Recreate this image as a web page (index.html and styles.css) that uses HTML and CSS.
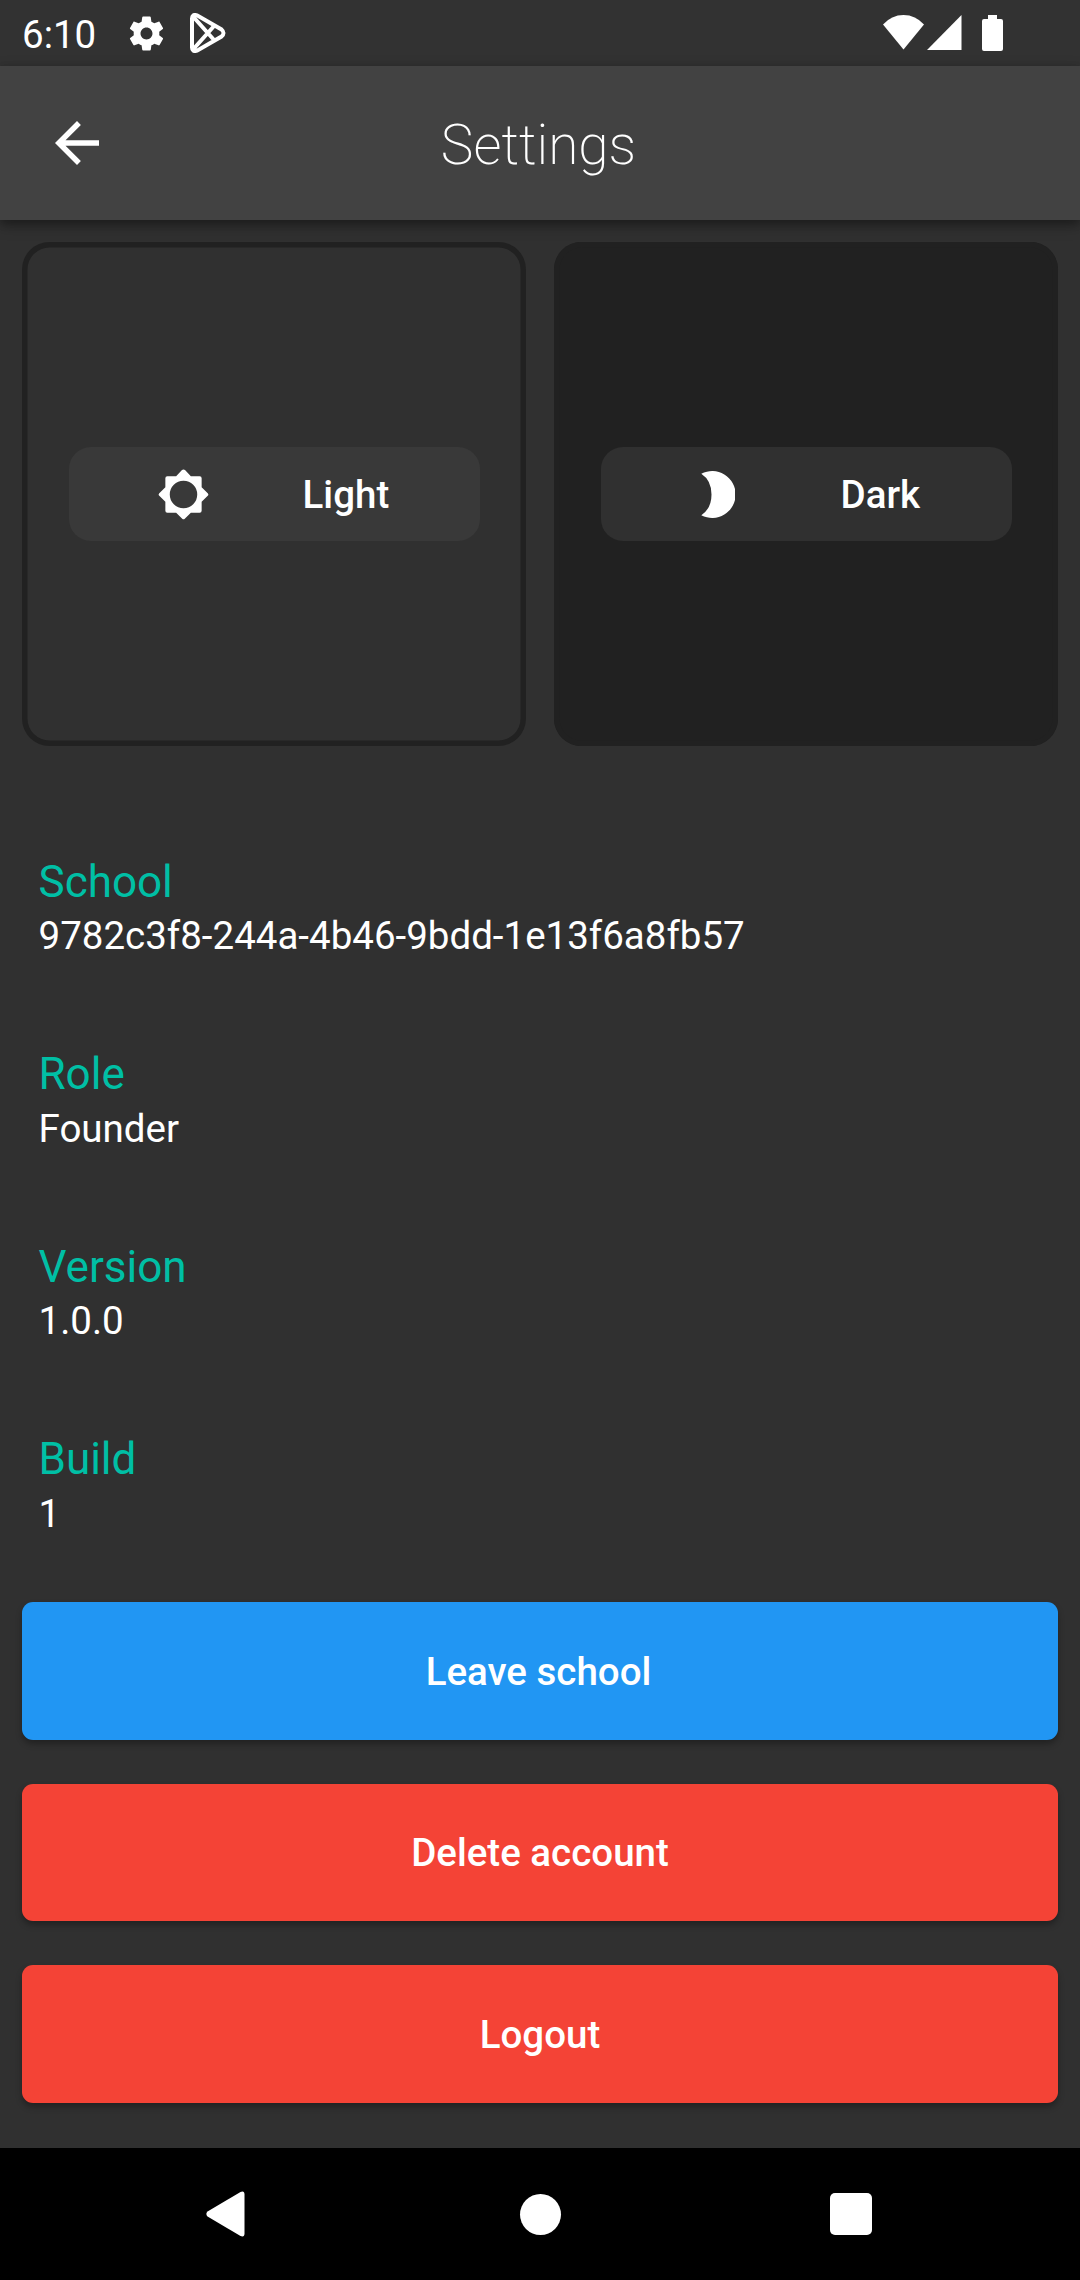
FILE: index.html
```html
<!DOCTYPE html>
<html lang="en">
<head>
<meta charset="utf-8">
<title>Settings</title>
<link rel="stylesheet" href="styles.css">
</head>
<body>
<div class="screen">
  <header class="status">
    <span class="time">6:10</span>
    <svg class="gear" viewBox="0 0 24 24"><path d="M19.430 12.980c.04-.32.07-.64.07-.98s-.03-.66-.07-.98l2.110-1.650c.19-.15.24-.42.12-.64l-2-3.460c-.12-.22-.39-.3-.61-.22l-2.490 1c-.52-.4-1.080-.73-1.690-.98l-.38-2.650C14.460 2.180 14.250 2 14 2h-4c-.25 0-.46.18-.49.42l-.38 2.650c-.61.25-1.170.59-1.690.98l-2.490-1c-.23-.09-.49 0-.61.22l-2 3.460c-.13.22-.07.49.12.64l2.110 1.650c-.04.32-.07.65-.07.98s.03.66.07.98l-2.110 1.650c-.19.15-.24.42-.12.64l2 3.460c.12.22.39.3.61.22l2.490-1c.52.4 1.080.73 1.690.98l.38 2.650c.03.24.24.42.49.42h4c.25 0 .46-.18.49-.42l.38-2.650c.61-.25 1.170-.59 1.690-.98l2.490 1c.23.09.49 0 .61-.22l2-3.460c.12-.22.07-.49-.12-.64l-2.110-1.650zM12 15.500c-1.930 0-3.500-1.570-3.500-3.500s1.570-3.500 3.500-3.500 3.500 1.570 3.500 3.500-1.570 3.500-3.500 3.500z"/></svg>
    <svg class="play" viewBox="0 0 36 40"><path d="M2 5.500Q2 .8 7 2.300L31.500 16.500Q35.500 20 31.500 23.500L7 37.700Q2 39.200 2 34.500ZM3 3.500L24.500 27.500M3 36.500L24.500 12.500"/></svg>
    <span class="spacer"></span>
    <svg class="wifi" viewBox="0 0 41 35"><path d="M0 9.500Q8.500 0 20.500 0T41 9.500L20.500 34.500Z"/></svg>
    <svg class="signal" viewBox="0 0 35 35"><path d="M34.500 0V35H0Z"/></svg>
    <svg class="battery" viewBox="0 0 21 36"><path d="M6 0h9v4h4q2 0 2 2v28q0 2-2 2H2q-2 0-2-2V6q0-2 2-2h4z"/></svg>
  </header>
  <div class="appbar">
    <svg class="back" viewBox="0 0 24 24"><path d="M20 11H7.830l5.590-5.590L12 4l-8 8 8 8 1.410-1.410L7.830 13H20v-2z"/></svg>
    <h1 class="title">Settings</h1>
  </div>
  <main class="content">
    <div class="themes">
      <div class="theme theme-light">
        <div class="pill">
          <svg class="sun" viewBox="0 0 52 52"><path fill-rule="evenodd" d="M26 .5Q27 .5 27.800 1.300L33.500 7.500H42.500Q44.500 7.500 44.500 9.500V18.500L50.700 24.700Q52 26 50.700 27.300L44.500 33.500V42.500Q44.500 44.500 42.500 44.500H33.500L27.300 50.700Q26 52 24.700 50.700L18.500 44.500H9.500Q7.500 44.500 7.500 42.500V33.500L1.300 27.300Q0 26 1.300 24.700L7.500 18.500V9.500Q7.500 7.500 9.500 7.500H18.500L24.200 1.300Q25 .5 26 .5ZM26 12a14 14 0 1 0 0 28a14 14 0 1 0 0-28Z"/></svg>
          <span class="label">Light</span>
        </div>
      </div>
      <div class="theme theme-dark">
        <div class="pill">
          <svg class="moon" viewBox="0 0 34 47"><path d="M.3 2.800A23.400 23.400 0 1 1 .3 44.200Q10.500 37.500 10.500 23.500T.3 2.800Z"/></svg>
          <span class="label">Dark</span>
        </div>
      </div>
    </div>
    <dl class="info">
      <div class="entry"><dt>School</dt><dd>9782c3f8-244a-4b46-9bdd-1e13f6a8fb57</dd></div>
      <div class="entry"><dt>Role</dt><dd>Founder</dd></div>
      <div class="entry"><dt>Version</dt><dd>1.0.0</dd></div>
      <div class="entry"><dt>Build</dt><dd>1</dd></div>
    </dl>
    <div class="actions">
      <button class="btn btn-blue">Leave school</button>
      <button class="btn btn-red">Delete account</button>
      <button class="btn btn-red">Logout</button>
    </div>
  </main>
  <nav class="navbar">
    <svg class="nav-back" viewBox="0 0 39 46"><path d="M1.500 20.500L34.500 1Q38.500-.5 38.500 3.500V42.500Q38.500 46.500 34.500 45L1.500 25.500Q-.8 23 1.500 20.500Z"/></svg>
    <span class="nav-home"></span>
    <span class="nav-recent"></span>
  </nav>
</div>
</body>
</html>
```

FILE: styles.css
```css
* { box-sizing: border-box; }
body { margin: 0; background: #303030; }
svg { display: block; fill: #fff; flex: none; }
.screen {
  width: 1080px;
  height: 2280px;
  display: flex;
  flex-direction: column;
  background: #303030;
  color: #fff;
  font-family: Roboto, sans-serif;
  font-size: 38.5px;
  overflow: hidden;
}
.status {
  height: 66px;
  flex: none;
  display: flex;
  align-items: flex-start;
  padding: 0 77px 0 22px;
  background: #323232;
}
.time { line-height: 45px; padding-top: 12px; width: 104px; }
.gear { width: 41px; height: 41px; margin-top: 13px; }
.play { width: 36px; height: 40px; margin: 13px 0 0 23px; fill: none; stroke: #fff; stroke-width: 4; }
.spacer { flex: 1; }
.wifi { width: 41px; height: 35px; margin-top: 15px; }
.signal { width: 35px; height: 35px; margin: 15px 0 0 3px; }
.battery { width: 21px; height: 36px; margin: 15px 0 0 20px; }
.appbar {
  height: 154px;
  flex: none;
  display: grid;
  grid-template-columns: 66px 1fr 66px;
  align-items: center;
  padding: 0 44px;
  background: #424242;
  box-shadow: 0 5px 14px rgba(0, 0, 0, .32), 0 3px 8px rgba(0, 0, 0, .2);
}
.back { width: 66px; height: 66px; }
.title { margin: 0; text-align: center; font-size: 55px; font-weight: 200; line-height: 64px; padding: 4px 3px 0 0; }
.content { flex: 1; padding: 22px 22px 0; }
.themes { display: flex; justify-content: space-between; }
.theme {
  width: 504px;
  height: 504px;
  border-radius: 27.5px;
  box-shadow: inset 0 0 0 5.5px #212121;
  display: flex;
  align-items: center;
  justify-content: center;
}
.theme-dark { background: #212121; }
.pill {
  width: 411px;
  height: 94px;
  border-radius: 22px;
  display: flex;
  align-items: center;
  background: #303030;
}
.theme-light .pill { background: #393939; }
.sun { width: 51px; height: 51px; margin: 1px 93.9px 0 89.2px; }
.moon { width: 34px; height: 47px; margin: 0 105.5px 0 100.5px; }
.label { font-weight: 500; line-height: 45px; }
.info { margin: 109.7px 0 0; padding-left: 16.5px; }
.entry { height: 192.5px; }
dt { color: #00bfa5; font-size: 44px; line-height: 52px; }
dd { margin: 5.4px 0 0; line-height: 45px; }
.actions { display: flex; flex-direction: column; gap: 44px; margin-top: -23.4px; }
.btn {
  height: 137.5px;
  border: 0;
  border-radius: 11px;
  color: #fff;
  font: 500 38.5px/45px Roboto, sans-serif;
  box-shadow: 0 4px 6px rgba(0, 0, 0, .3);
}
.btn-blue { background: #2196f3; padding-right: 9px; }
.btn-red { background: #f44336; }
.navbar {
  height: 132px;
  flex: none;
  display: flex;
  align-items: center;
  background: #000;
}
.nav-back { width: 39px; height: 46px; margin-left: 206px; }
.nav-home { width: 41px; height: 41px; margin-left: 274.5px; border-radius: 50%; background: #fff; }
.nav-recent { width: 42px; height: 42px; margin-left: 269px; border-radius: 5px; background: #fff; }
```
